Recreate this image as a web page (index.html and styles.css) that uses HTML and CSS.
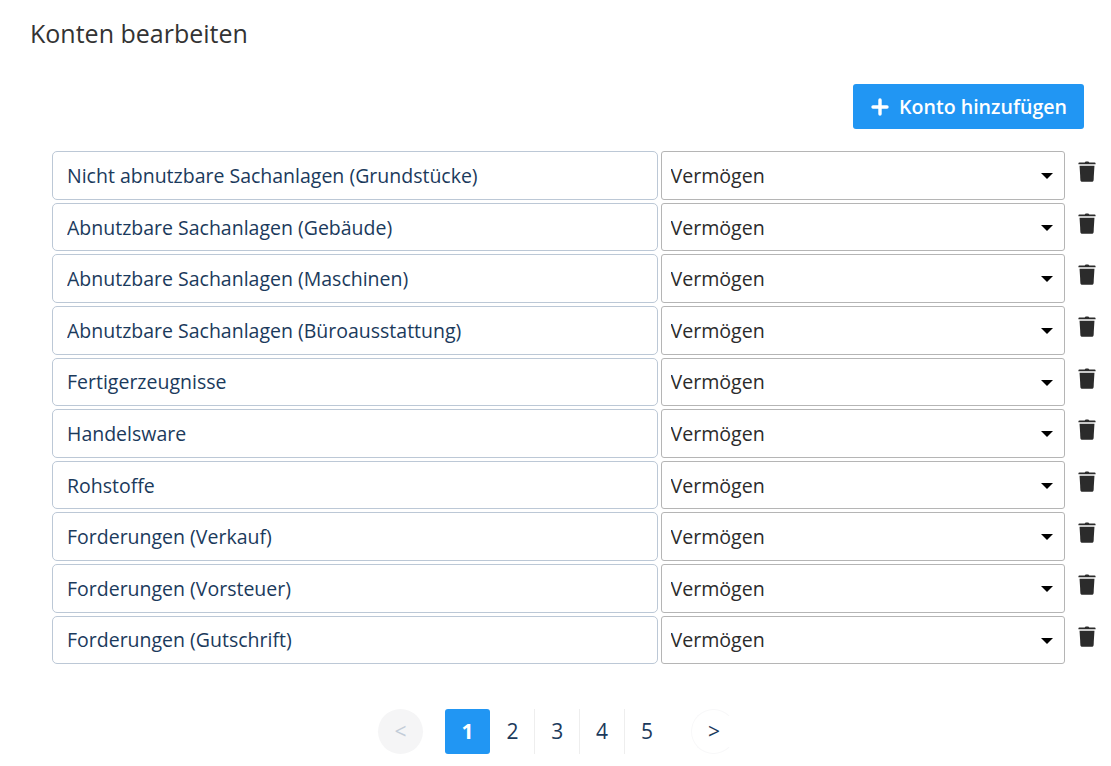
FILE: index.html
```html
<!DOCTYPE html>
<html lang="de">
<head>
  <meta charset="UTF-8" />
  <title>Konten bearbeiten</title>
  <link rel="stylesheet" href="styles.css">
</head>
<body>
  <h1>Konten bearbeiten</h1>

  <div class="aktionen">
    <button class="btn-neu" type="button">
      <svg class="icon-plus" viewBox="0 0 18 18" aria-hidden="true"><path d="M9 2v14M2 9h14" /></svg>
      Konto hinzufügen
    </button>
  </div>

  <div class="konten" id="konten"></div>

  <nav class="seiten">
    <button class="pfeil pfeil-aus" type="button">&lt;</button>
    <div class="nummern">
      <button class="nummer aktiv" type="button">1</button>
      <button class="nummer" type="button">2</button>
      <button class="nummer" type="button">3</button>
      <button class="nummer" type="button">4</button>
      <button class="nummer" type="button">5</button>
    </div>
    <button class="pfeil pfeil-an" type="button">&gt;</button>
  </nav>

  <template id="zeile">
    <div class="zeile">
      <input class="konto-name" type="text">
      <div class="auswahl">
        <select>
          <option>Vermögen</option>
          <option>Schulden</option>
        </select>
      </div>
      <button class="loeschen" type="button" aria-label="Löschen">
        <svg viewBox="0 0 18 22" aria-hidden="true">
          <path d="M6.6 1.6C6.9.8 7.4.5 8 .5h2c.6 0 1.1.3 1.4 1.1H17c.6 0 1 .4 1 .9v.9H0v-.9c0-.5.4-.9 1-.9z" />
          <path d="M1.2 5h15.6l-.9 15.2c-.1 1-.8 1.6-1.7 1.6H3.8c-.9 0-1.6-.6-1.7-1.6z" />
        </svg>
      </button>
    </div>
  </template>

  <script src="konten.js"></script>
</body>
</html>
```

FILE: styles.css
```css
* {
  box-sizing: border-box;
}

body {
  margin: 0;
  height: 766px;
  overflow: hidden;
  background-color: #fff;
  color: #2b2b2b;
  font-family: "Open Sans", sans-serif;
}

h1 {
  margin: 0;
  padding: 16px 0 0 30px;
  font-size: 25px;
  font-weight: 400;
  line-height: 34px;
  color: #333;
}

.aktionen {
  display: flex;
  justify-content: flex-end;
  padding: 34px 27px 0 0;
}

.btn-neu {
  display: flex;
  align-items: center;
  gap: 10px;
  width: 231px;
  height: 45px;
  padding: 0 0 0 18px;
  border: none;
  border-radius: 3px;
  background-color: #2196f3;
  color: #fff;
  font-family: inherit;
  font-size: 19.6px;
  font-weight: 600;
}

.icon-plus {
  width: 18px;
  height: 18px;
  fill: none;
  stroke: #fff;
  stroke-width: 3.4;
  stroke-linecap: round;
}

.konten {
  display: flex;
  flex-direction: column;
  gap: 3px;
  padding: 22.2px 0 0 52px;
}

.zeile {
  display: flex;
  align-items: flex-start;
  height: 48.6px;
}

.konto-name {
  width: 606px;
  height: 48.6px;
  padding: 0 14px;
  border: 1px solid #bcc8d6;
  border-radius: 5px;
  color: #1b3a5c;
  font-family: inherit;
  font-size: 19.5px;
}

.auswahl {
  position: relative;
  width: 404px;
  margin-left: 3px;
}

.auswahl::after {
  content: "";
  position: absolute;
  top: 22px;
  right: 12px;
  border-top: 6px solid #000;
  border-left: 6.5px solid transparent;
  border-right: 6.5px solid transparent;
  pointer-events: none;
}

.auswahl select {
  display: block;
  width: 100%;
  height: 48.6px;
  padding: 0 8.5px;
  border: 1.5px solid #b5b5b5;
  border-radius: 3px;
  appearance: none;
  background-color: #fff;
  color: #2b2b2b;
  font-family: inherit;
  font-size: 19.6px;
}

.loeschen {
  width: 18px;
  height: 21px;
  margin: 10px 0 0 13px;
  padding: 0;
  border: none;
  background: none;
}

.loeschen svg {
  display: block;
  width: 18px;
  height: 21px;
  fill: #2b2b2b;
}

.seiten {
  display: flex;
  align-items: center;
  padding: 44.6px 0 0 378px;
}

.pfeil {
  width: 45px;
  height: 45px;
  padding: 0;
  border-radius: 50%;
  font-family: inherit;
  font-size: 21px;
}

.pfeil-aus {
  border: none;
  background-color: #f5f5f6;
  color: #c3ccd8;
}

.pfeil-an {
  border: 1px solid #f8f8f9;
  border-right-color: transparent;
  background: none;
  color: #1b3a5c;
}

.nummern {
  display: flex;
  margin: 0 22px;
}

.nummer {
  width: 44.7px;
  height: 45px;
  padding: 0;
  border: none;
  border-right: 1px solid #eee;
  background: none;
  color: #1b3a5c;
  font-family: inherit;
  font-size: 21px;
}

.nummer:last-child {
  border-right: none;
}

.nummer.aktiv {
  width: 45px;
  margin-right: 0.7px;
  border-right: none;
  border-radius: 3px;
  background-color: #2196f3;
  color: #fff;
  font-weight: 700;
}
```

FILE: konten.js
```js
const konten = [
  "Nicht abnutzbare Sachanlagen (Grundstücke)",
  "Abnutzbare Sachanlagen (Gebäude)",
  "Abnutzbare Sachanlagen (Maschinen)",
  "Abnutzbare Sachanlagen (Büroausstattung)",
  "Fertigerzeugnisse",
  "Handelsware",
  "Rohstoffe",
  "Forderungen (Verkauf)",
  "Forderungen (Vorsteuer)",
  "Forderungen (Gutschrift)"
];

const liste = document.getElementById("konten");
const vorlage = document.getElementById("zeile");

konten.forEach(name => {
  const zeile = vorlage.content.cloneNode(true);
  zeile.querySelector(".konto-name").value = name;
  liste.appendChild(zeile);
});
```
